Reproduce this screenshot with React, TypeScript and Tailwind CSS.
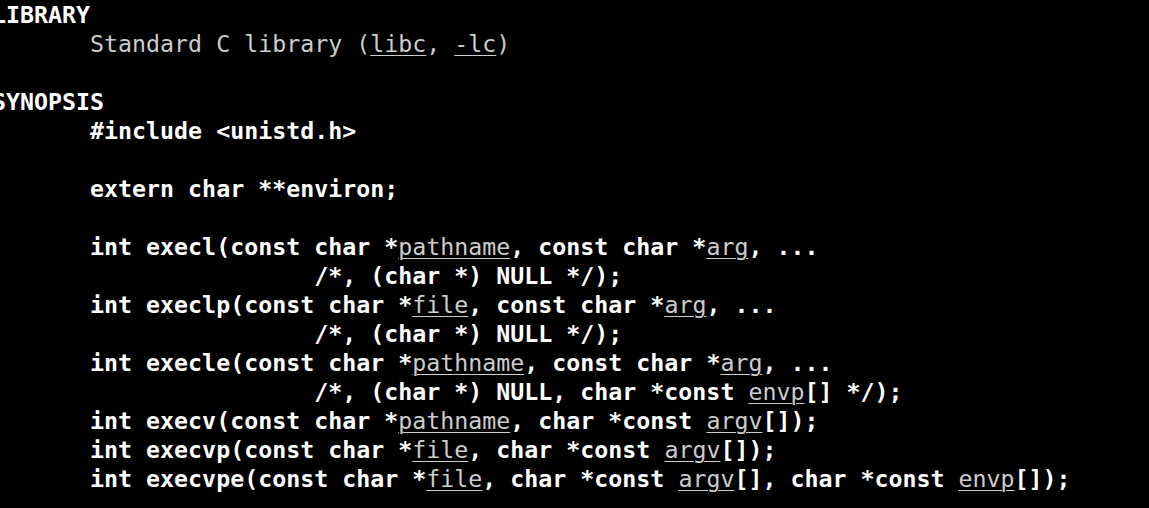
const B = ({ children }: { children: React.ReactNode }) => (
  <span className="font-bold text-white">{children}</span>
);

const U = ({ children }: { children: React.ReactNode }) => (
  <span className="underline underline-offset-[3px] decoration-1 text-[#cccccc]">{children}</span>
);

const Line = ({ children }: { children?: React.ReactNode }) => (
  <div className="h-[29px] leading-[29px] whitespace-pre">{children}</div>
);

const IND = "       ";
const CONT = "                       ";

export default function App() {
  return (
    <div className="w-[1149px] h-[508px] overflow-hidden bg-black">
      <div className="ml-[-8px] font-['DejaVu_Sans_Mono',monospace] text-[23.28px] text-[#cccccc]">
        <Line>
          <B>LIBRARY</B>
        </Line>
        <Line>
          {IND}Standard C library (<U>libc</U>, <U>-lc</U>)
        </Line>
        <Line />
        <Line>
          <B>SYNOPSIS</B>
        </Line>
        <Line>
          {IND}
          <B>#include &lt;unistd.h&gt;</B>
        </Line>
        <Line />
        <Line>
          {IND}
          <B>extern char **environ;</B>
        </Line>
        <Line />
        <Line>
          {IND}
          <B>int execl(const char *</B>
          <U>pathname</U>
          <B>, const char *</B>
          <U>arg</U>
          <B>, ...</B>
        </Line>
        <Line>
          {CONT}
          <B>/*, (char *) NULL */);</B>
        </Line>
        <Line>
          {IND}
          <B>int execlp(const char *</B>
          <U>file</U>
          <B>, const char *</B>
          <U>arg</U>
          <B>, ...</B>
        </Line>
        <Line>
          {CONT}
          <B>/*, (char *) NULL */);</B>
        </Line>
        <Line>
          {IND}
          <B>int execle(const char *</B>
          <U>pathname</U>
          <B>, const char *</B>
          <U>arg</U>
          <B>, ...</B>
        </Line>
        <Line>
          {CONT}
          <B>/*, (char *) NULL, char *const </B>
          <U>envp</U>
          <B>[] */);</B>
        </Line>
        <Line>
          {IND}
          <B>int execv(const char *</B>
          <U>pathname</U>
          <B>, char *const </B>
          <U>argv</U>
          <B>[]);</B>
        </Line>
        <Line>
          {IND}
          <B>int execvp(const char *</B>
          <U>file</U>
          <B>, char *const </B>
          <U>argv</U>
          <B>[]);</B>
        </Line>
        <Line>
          {IND}
          <B>int execvpe(const char *</B>
          <U>file</U>
          <B>, char *const </B>
          <U>argv</U>
          <B>[], char *const </B>
          <U>envp</U>
          <B>[]);</B>
        </Line>
      </div>
    </div>
  );
}
